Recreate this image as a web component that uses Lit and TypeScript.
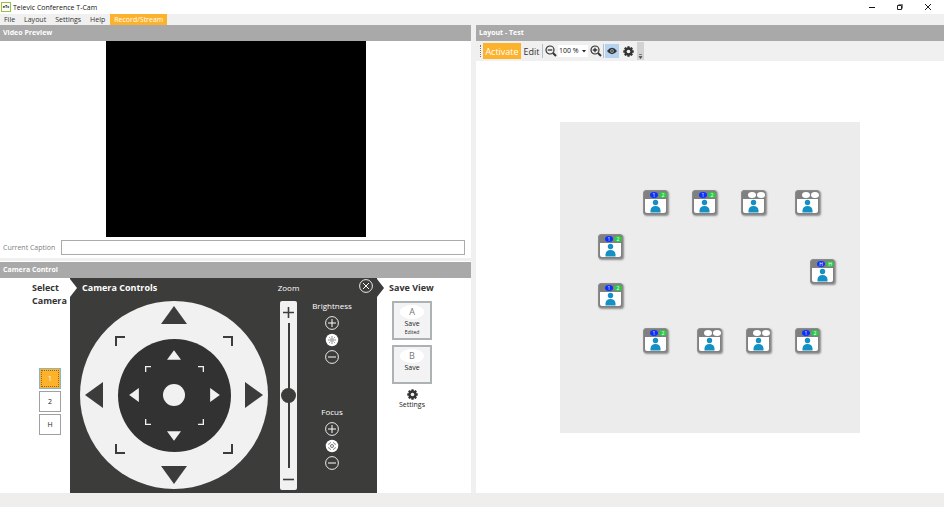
import { LitElement, html, css, svg } from "lit";
import { customElement, property } from "lit/decorators.js";
import { classMap } from "lit/directives/class-map.js";

const base = css`
  * {
    box-sizing: border-box;
  }
  button,
  input,
  select {
    font: inherit;
    color: inherit;
    margin: 0;
    padding: 0;
    border: 0;
    background: none;
    border-radius: 0;
    appearance: none;
  }
  svg {
    display: block;
  }
`;

const gear = (size: number) => html`
  <svg width=${size} height=${size} viewBox="0 0 22 22" aria-hidden="true">
    <g fill="#333">
      ${[0, 45, 90, 135].map(
        (a) => svg`<rect x="8.6" y="0.5" width="4.8" height="21" rx="1" transform="rotate(${a} 11 11)" />`
      )}
      <circle cx="11" cy="11" r="8" />
    </g>
    <circle cx="11" cy="11" r="3.6" fill="#f4f4f4" />
  </svg>
`;

const magnifier = (plus: boolean) => html`
  <svg width="12" height="12" viewBox="0 0 24 24" fill="none" stroke="#333" aria-hidden="true">
    <circle cx="10" cy="10" r="8" stroke-width="2.4" />
    <path d="M16 16L22 22" stroke-width="4" />
    <path d=${plus ? "M5.5 10H14.5M10 5.5V14.5" : "M5.5 10H14.5"} stroke-width="2.6" />
  </svg>
`;

type Dir = "up" | "down" | "left" | "right" | "nw" | "ne" | "sw" | "se";
const arrows: Record<string, string> = {
  up: "0,18 13,0 26,18",
  down: "0,0 26,0 13,18",
  left: "18,0 18,26 0,13",
  right: "0,0 18,13 0,26",
};
const corners: Record<string, string> = {
  nw: "M1 10V1H10",
  ne: "M0 1H9V10",
  sw: "M1 0V9H10",
  se: "M9 0V9H0",
};
const order: Dir[] = ["nw", "up", "ne", "left", "right", "sw", "down", "se"];
const names: Record<Dir, string> = {
  up: "up",
  down: "down",
  left: "left",
  right: "right",
  nw: "up left",
  ne: "up right",
  sw: "down left",
  se: "down right",
};

@customElement("direction-pad")
export class DirectionPad extends LitElement {
  static styles = [
    base,
    css`
      :host {
        display: block;
      }
      .pad {
        display: grid;
        grid-template: 45px 98px 45px / 45px 98px 45px;
        border-radius: 50%;
        background: #f1f1f1;
        color: #3c3c3b;
      }
      .inner {
        grid-area: 1 / 1 / 4 / 4;
        place-self: center;
        grid-template: 33px 47px 33px / 33px 47px 33px;
        background: #323232;
        color: #f1f1f1;
      }
      .key {
        display: flex;
      }
      .nw { grid-area: 1 / 1; place-self: end; }
      .ne { grid-area: 1 / 3; place-self: end start; }
      .sw { grid-area: 3 / 1; place-self: start end; }
      .se { grid-area: 3 / 3; place-self: start; }
      .up { grid-area: 1 / 2; place-self: start center; padding-top: 5px; }
      .down { grid-area: 3 / 2; place-self: end center; padding-bottom: 5px; }
      .left { grid-area: 2 / 1; place-self: center start; padding-left: 5px; }
      .right { grid-area: 2 / 3; place-self: center end; padding-right: 5px; }
      .inner .up { padding-top: 11px; }
      .inner .down { padding-bottom: 11px; }
      .inner .left { padding-left: 11px; }
      .inner .right { padding-right: 11px; }
      .home {
        grid-area: 2 / 2;
        place-self: center;
        width: 22px;
        height: 22px;
        border-radius: 50%;
        background: #f1f1f1;
      }
    `,
  ];

  private key(d: Dir, fine: boolean) {
    const label = `${fine ? "Fine move" : "Move"} ${names[d]}`;
    const c = corners[d];
    const tall = d === "up" || d === "down";
    const long = fine ? 14 : 26;
    const short = fine ? 10 : 18;
    return html`<button class="key ${d}" aria-label=${label}>
      ${c
        ? html`<svg width=${fine ? 6 : 10} height=${fine ? 6 : 10} viewBox="0 0 10 10">
            <path d=${c} fill="none" stroke="currentColor" stroke-width=${fine ? 2.4 : 2} />
          </svg>`
        : html`<svg
            width=${tall ? long : short}
            height=${tall ? short : long}
            viewBox=${tall ? "0 0 26 18" : "0 0 18 26"}
          >
            <polygon points=${arrows[d]} fill="currentColor" />
          </svg>`}
    </button>`;
  }

  render() {
    return html`<div class="pad">
      <div class="pad inner">
        ${order.map((d) => this.key(d, true))}
        <button class="home" aria-label="Home position"></button>
      </div>
      ${order.map((d) => this.key(d, false))}
    </div>`;
  }
}

@customElement("step-control")
export class StepControl extends LitElement {
  @property() label = "";
  @property() kind = "brightness";

  static styles = [
    base,
    css`
      :host {
        display: flex;
        flex-direction: column;
        align-items: center;
        gap: 3px;
        color: #fff;
      }
      .label {
        font-size: 8px;
        line-height: 14px;
      }
      button {
        display: block;
        width: 14px;
        height: 14px;
      }
    `,
  ];

  private ring(name: string, d: string) {
    return html`<button aria-label="${name} ${this.label}">
      <svg width="14" height="14" viewBox="0 0 14 14" fill="none" stroke="#fff">
        <circle cx="7" cy="7" r="6.4" stroke-width="0.9" />
        <path d=${d} stroke-width="1" />
      </svg>
    </button>`;
  }

  render() {
    return html`
      <span class="label">${this.label}</span>
      ${this.ring("Increase", "M3 7H11M7 3V11")}
      <button aria-label="Automatic ${this.label}">
        <svg width="14" height="14" viewBox="0 0 28 28" fill="none" stroke="#3c3c3b">
          <circle cx="14" cy="14" r="12.5" fill="#fff" stroke="none" />
          ${this.kind === "brightness"
            ? svg`<circle cx="14" cy="14" r="2.6" stroke-width="1.2" />
                <path stroke-width="1.2" d="M14 6V9.5M14 18.5V22M6 14H9.5M18.5 14H22M8.3 8.3L10.8 10.8M17.2 17.2L19.7 19.7M19.7 8.3L17.2 10.8M10.8 17.2L8.3 19.7" />`
            : svg`<circle cx="14" cy="14" r="3" stroke-width="1.4" />
                <path stroke-width="1.4" d="M7.5 11.5V10L10 7.5H11.5M16.5 7.5H18L20.5 10V11.5M20.5 16.5V18L18 20.5H16.5M11.5 20.5H10L7.5 18V16.5" />`}
        </svg>
      </button>
      ${this.ring("Decrease", "M3 7H11")}
    `;
  }
}

@customElement("seat-node")
export class SeatNode extends LitElement {
  @property() a = "";
  @property() b = "";

  static styles = [
    base,
    css`
      :host {
        display: block;
      }
      .seat {
        display: flex;
        flex-direction: column;
        align-items: center;
        width: 25px;
        height: 25px;
        border: 1px solid #8c8c8c;
        border-radius: 3px;
        background: #808080;
        box-shadow: 1px 1px 2px #0006;
      }
      .badges {
        display: flex;
        gap: 1px;
        align-self: flex-end;
        padding-top: 1px;
        height: 8px;
      }
      .badge {
        width: 8px;
        height: 6px;
        border-radius: 50%;
        background: #fff;
        color: #fff;
        font-size: 5px;
        line-height: 6px;
        text-align: center;
      }
      .blue { background: #0a32ff; }
      .green { background: #2fc84a; }
      .face {
        width: 21px;
        height: 14px;
        background: #fff;
        border-radius: 0 0 2px 2px;
      }
    `,
  ];

  render() {
    return html`<button class="seat" aria-label="Seat">
      <span class="badges">
        <span class=${classMap({ badge: true, blue: !!this.a })}>${this.a}</span>
        <span class=${classMap({ badge: true, green: !!this.b })}>${this.b}</span>
      </span>
      <span class="face">
        <svg width="21" height="14" viewBox="0 0 21 14" fill="#1590c4">
          <circle cx="10.5" cy="3.5" r="2.7" />
          <path d="M5.5 13.4V11.6Q5.8 7 10.5 7T15.5 11.6V13.4Z" />
        </svg>
      </span>
    </button>`;
  }
}

const seats = [
  { x: 83, y: 68, a: "1", b: "2" },
  { x: 132, y: 68, a: "1", b: "2" },
  { x: 181, y: 68, a: "", b: "" },
  { x: 235, y: 68, a: "", b: "" },
  { x: 38, y: 112, a: "1", b: "2" },
  { x: 250, y: 137, a: "H", b: "H" },
  { x: 38, y: 161, a: "1", b: "2" },
  { x: 83, y: 206, a: "1", b: "2" },
  { x: 137, y: 206, a: "", b: "" },
  { x: 186, y: 206, a: "", b: "" },
  { x: 235, y: 206, a: "1", b: "2" },
];

@customElement("app-root")
export class AppRoot extends LitElement {
  static styles = [
    base,
    css`
      :host {
        display: flex;
        flex-direction: column;
        min-height: 100vh;
        background: #fff;
        color: #333;
        font-family: "Open Sans", "Noto Sans", sans-serif;
        font-size: 7px;
      }
      .titlebar {
        display: flex;
        align-items: center;
        height: 14px;
        padding: 0 2px 0 1px;
        gap: 2px;
        color: #111;
      }
      .logo {
        width: 10px;
        height: 10px;
        border: 1px solid #9ac43c;
        font-size: 4px;
        line-height: 8px;
        font-weight: 700;
        text-align: center;
      }
      .caption {
        margin-left: auto;
        display: flex;
      }
      .caption button {
        width: 28px;
        height: 14px;
        display: grid;
        place-items: center;
      }
      .menu {
        display: flex;
        gap: 1px;
        height: 11px;
        background: #f0f0f0;
        line-height: 11px;
      }
      .menu button {
        padding: 0 4px;
      }
      .menu .hot {
        background: #fdb22b;
        color: #fff;
      }
      .main {
        flex: 1;
        display: grid;
        grid-template-columns: calc(50% - 1px) 1fr;
        column-gap: 5px;
        background: #f0f0f0;
      }
      .column {
        display: flex;
        flex-direction: column;
        background: #fff;
      }
      h2,
      h3 {
        margin: 0;
        font-weight: 700;
      }
      .bar {
        height: 16px;
        padding-left: 3px;
        background: #a9a9a9;
        color: #fff;
        font-size: 7px;
        line-height: 16px;
      }
      .video {
        align-self: center;
        width: 260px;
        height: 196px;
        background: #000;
      }
      .current {
        display: flex;
        align-items: center;
        gap: 6px;
        height: 20px;
        padding: 0 6px 0 3px;
        color: #808080;
      }
      .current input {
        flex: 1;
        height: 15px;
        border: 1px solid #ababab;
        background: #fff;
      }
      .split {
        height: 5px;
        background: #f0f0f0;
        border-top: 1px solid #fff;
        border-bottom: 1px solid #fff;
      }
      .control {
        flex: 1;
        display: grid;
        grid-template-columns: 70px 307px 1fr;
      }
      h3 {
        font-size: 9px;
        line-height: 13px;
      }
      .select {
        padding-top: 3px;
      }
      .select h3 {
        padding-left: 32px;
      }
      .cameras {
        display: flex;
        flex-direction: column;
        gap: 2px;
        padding: 61px 0 0 39px;
      }
      .cameras button {
        width: 22px;
        height: 21px;
        border: 1px solid #a0a0a0;
        background: #fff;
        color: #222;
      }
      .cameras .on {
        border-color: #8ab4c8;
        background: #fdb22b;
        color: #fff;
        outline: 1px dotted #8a6a30;
        outline-offset: -3px;
      }
      .panel {
        position: relative;
        display: flex;
        background: #3c3c3b;
        color: #fff;
      }
      .notch {
        position: absolute;
        top: 1px;
        width: 7px;
        height: 18px;
        clip-path: polygon(0 0, 100% 50%, 0 100%);
      }
      .in {
        left: 0;
        background: #fff;
      }
      .out {
        left: 100%;
        background: #3c3c3b;
      }
      .move {
        padding-left: 10px;
        width: 198px;
      }
      .move h3 {
        padding: 3px 0 7px 2px;
      }
      .zoom {
        display: flex;
        flex-direction: column;
        align-items: center;
        width: 41px;
        padding-top: 3px;
        font-size: 8px;
        line-height: 13px;
        gap: 7px;
      }
      .slide {
        display: flex;
        flex-direction: column;
        align-items: center;
        width: 17px;
        height: 189px;
        background: #f1f1f1;
        border-radius: 2px;
      }
      .slide button {
        display: grid;
        place-items: center;
        width: 17px;
        height: 22px;
      }
      .slide input {
        flex: 1;
        min-height: 0;
        width: 15px;
        writing-mode: vertical-lr;
        background: linear-gradient(#3c3c3b, #3c3c3b) center / 2px 100% no-repeat;
      }
      .slide input::-webkit-slider-thumb {
        appearance: none;
        width: 15px;
        height: 15px;
        border-radius: 50%;
        background: #3c3c3b;
      }
      .steps {
        display: flex;
        flex-direction: column;
        gap: 41px;
        width: 46px;
        padding-top: 21px;
      }
      .close {
        width: 14px;
        height: 14px;
        margin: 1px 4px 0 auto;
        align-self: flex-start;
      }
      .save {
        padding-top: 3px;
      }
      .save h3 {
        padding-left: 12px;
      }
      .slots {
        display: flex;
        flex-direction: column;
        align-items: center;
        gap: 5px;
        width: 40px;
        margin: 7px 0 0 15px;
      }
      .slot {
        display: flex;
        flex-direction: column;
        align-items: center;
        width: 40px;
        height: 39px;
        padding-top: 2px;
        border: 2px solid #adb3b5;
        background: #f3f3f3;
        color: #222;
        line-height: 10px;
      }
      .letter {
        width: 24px;
        height: 14px;
        border-radius: 50%;
        background: #fff;
        color: #777;
        font-size: 9px;
        line-height: 14px;
      }
      .tiny {
        font-size: 5px;
        line-height: 7px;
      }
      .settings {
        display: flex;
        flex-direction: column;
        align-items: center;
        color: #222;
        line-height: 10px;
      }
      .tools {
        display: flex;
        align-items: center;
        height: 20px;
        padding-left: 4px;
        gap: 1px;
        background: #f0f0f0;
        font-size: 9px;
      }
      .tools button {
        display: grid;
        place-items: center;
        height: 16px;
        min-width: 13px;
      }
      .grip {
        width: 2px;
        height: 12px;
        border-left: 1px dotted #777;
      }
      .tools .active {
        width: 38px;
        background: #fdb22b;
        color: #fff;
      }
      .tools .edit {
        min-width: 19px;
      }
      .sep {
        width: 1px;
        height: 14px;
        background: #b4bfc8;
      }
      .scale {
        position: relative;
        display: flex;
      }
      .scale select {
        width: 30px;
        height: 12px;
        padding-left: 1px;
        background: #fff;
        color: #111;
        font-size: 7px;
        line-height: 12px;
      }
      .scale svg {
        position: absolute;
        right: 2px;
        top: 5px;
        pointer-events: none;
      }
      .tools .eye {
        width: 14px;
        height: 14px;
        background: #b5d3ef;
      }
      .tools .options {
        min-width: 16px;
      }
      .tools .more {
        width: 7px;
        min-width: 7px;
        height: 18px;
        background: #d2d2d2;
        place-items: end center;
      }
      .canvas {
        flex: 1;
        display: grid;
        place-items: center;
      }
      .stage {
        position: relative;
        width: 300px;
        height: 311px;
        background: #ececec;
      }
      .stage seat-node {
        position: absolute;
      }
      .status {
        height: 14px;
        background: #f0eded;
      }
    `,
  ];

  render() {
    return html`
      <header>
        <div class="titlebar">
          <span class="logo">eTc</span>
          <span>Televic Conference T-Cam</span>
          <div class="caption">
            <button aria-label="Minimize">
              <svg width="6" height="6"><path d="M0 3.5H6" stroke="#111" /></svg>
            </button>
            <button aria-label="Restore">
              <svg width="6" height="6" fill="none" stroke="#222">
                <path d="M0.5 1.5H4.5V5.5H0.5Z" />
                <path d="M1.5 0.5H5.5V4.5" stroke="#777" />
              </svg>
            </button>
            <button aria-label="Close">
              <svg width="6" height="6"><path d="M0 0L6 6M6 0L0 6" stroke="#222" /></svg>
            </button>
          </div>
        </div>
        <nav class="menu">
          <button>File</button><button>Layout</button><button>Settings</button><button>Help</button
          ><button class="hot">Record/Stream</button>
        </nav>
      </header>
      <main class="main">
        <div class="column">
          <h2 class="bar">Video Preview</h2>
          <div class="video"></div>
          <div class="current">
            <label for="caption">Current Caption</label>
            <input id="caption" type="text" />
          </div>
          <div class="split"></div>
          <h2 class="bar">Camera Control</h2>
          <div class="control">
            <section class="select">
              <h3>Select<br />Camera</h3>
              <div class="cameras">
                <button class="on">1</button>
                <button>2</button>
                <button>H</button>
              </div>
            </section>
            <section class="panel">
              <span class="notch in"></span>
              <span class="notch out"></span>
              <div class="move">
                <h3>Camera Controls</h3>
                <direction-pad></direction-pad>
              </div>
              <div class="zoom">
                <label for="zoom">Zoom</label>
                <div class="slide">
                  <button aria-label="Zoom in">
                    <svg width="11" height="11"><path d="M0 5.5H11M5.5 0V11" stroke="#3c3c3b" stroke-width="1.6" /></svg>
                  </button>
                  <input id="zoom" type="range" min="0" max="100" value="50" />
                  <button aria-label="Zoom out">
                    <svg width="11" height="11"><path d="M0 5.5H11" stroke="#3c3c3b" stroke-width="1.6" /></svg>
                  </button>
                </div>
              </div>
              <div class="steps">
                <step-control label="Brightness" kind="brightness"></step-control>
                <step-control label="Focus" kind="focus"></step-control>
              </div>
              <button class="close" aria-label="Close controls">
                <svg width="14" height="14" fill="none" stroke="#fff">
                  <circle cx="7" cy="7" r="6.4" stroke-width="0.9" />
                  <path d="M4 4L10 10M10 4L4 10" />
                </svg>
              </button>
            </section>
            <section class="save">
              <h3>Save View</h3>
              <div class="slots">
                <button class="slot">
                  <span class="letter">A</span><span>Save</span><span class="tiny">Edited</span>
                </button>
                <button class="slot"><span class="letter">B</span><span>Save</span></button>
                <button class="settings">${gear(11)}<span>Settings</span></button>
              </div>
            </section>
          </div>
        </div>
        <div class="column">
          <h2 class="bar">Layout - Test</h2>
          <div class="tools">
            <span class="grip"></span>
            <button class="active">Activate</button>
            <button class="edit">Edit</button>
            <span class="sep"></span>
            <button aria-label="Zoom out">${magnifier(false)}</button>
            <div class="scale">
              <select aria-label="Scale">
                <option>100 %</option>
              </select>
              <svg width="4" height="3"><path d="M0 0H4L2 2.5Z" fill="#222" /></svg>
            </div>
            <button aria-label="Zoom in">${magnifier(true)}</button>
            <span class="sep"></span>
            <button class="eye" aria-label="Preview">
              <svg width="10" height="8" viewBox="0 0 20 14">
                <path d="M0 7Q10 -6 20 7Q10 20 0 7Z" fill="#333" />
                <circle cx="10" cy="7" r="3.4" fill="#b5d3ef" />
                <circle cx="10" cy="7" r="1.8" fill="#333" />
              </svg>
            </button>
            <button class="options" aria-label="Options">${gear(11)}</button>
            <button class="more" aria-label="More">
              <svg width="5" height="6"><path d="M1 0.5H4M1 2.5H4L2.5 4.5Z" fill="#444" stroke="#444" stroke-width="0.6" /></svg>
            </button>
          </div>
          <div class="canvas">
            <div class="stage">
              ${seats.map(
                (s) => html`<seat-node style="left:${s.x}px;top:${s.y}px" .a=${s.a} .b=${s.b}></seat-node>`
              )}
            </div>
          </div>
        </div>
      </main>
      <footer class="status"></footer>
    `;
  }
}
